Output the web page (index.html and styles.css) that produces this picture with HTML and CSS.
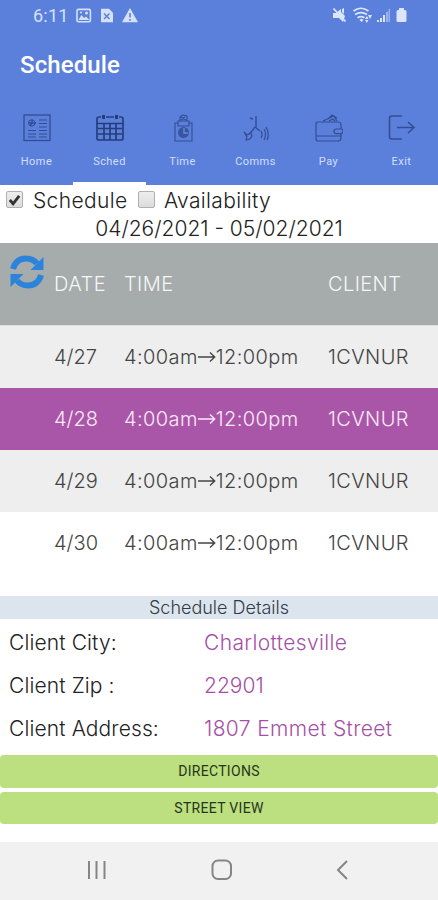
FILE: index.html
```html
<!DOCTYPE html>
<html lang="en">
<head>
<meta charset="utf-8">
<meta name="viewport" content="width=device-width">
<title>Schedule</title>
<link rel="stylesheet" href="styles.css">
</head>
<body>
<header class="appbar">
  <div class="status">
    <span class="clock">6:11</span>
    <svg class="status-left" width="62" height="16" viewBox="0 0 62 16" fill="#d5e0fa">
      <rect x="1" y="1.4" width="13.4" height="12.4" rx="1.5" fill="none" stroke="#d5e0fa" stroke-width="1.6"/>
      <path d="M2.500 12l3-5 2.500 3 2-1.500 3.500 3.500z"/><circle cx="10.500" cy="5" r="1.500"/><circle cx="5" cy="4.500" r="1"/>
      <path d="M25 .7h8l4 4v9.600H25z"/>
      <path d="M28 5.500l5.500 5.500M33.500 5.500L28 11" stroke="#5b80dc" stroke-width="1.500"/>
      <path d="M54 0l8 14.300H46z"/>
      <path d="M54 5v4.500M54 11v1.700" stroke="#5b80dc" stroke-width="1.600"/>
    </svg>
    <svg class="status-right" width="76" height="17" viewBox="0 0 76 17" fill="#dce5fc">
      <path d="M1 6h3l5-4v3l4 4-2 6-4-4H1zM10 2l2-1v6L10 5z"/>
      <path d="M1.500 1.500l12 13" stroke="#dce5fc" stroke-width="1.800"/>
      <g fill="none" stroke="#dce5fc" stroke-width="1.700"><path d="M21.500 4q7.500-5.500 15 0M23 7.500q6-3.800 12 0M25.500 10.700q3.500-2 7 0"/></g>
      <path d="M27.500 13l2-1.500 2 1.500-2 2zM33 12l2-3 1.500 3zM33 13h3.500l-1.700 3zM36 8h4l-2 4z"/>
      <path d="M45 13h2v2h-2zM48 11h2v4h-2zM51 8h2v7h-2z"/>
      <path d="M54 5h2v10h-2zM56.500 2h1.500v13h-1.500z" opacity=".5"/>
      <path d="M67 1h5v2h1q1.500 0 1.500 1.500v9q0 1.500-1.500 1.500h-7q-1.500 0-1.500-1.500v-9Q64.500 3 66 3h1z"/>
    </svg>
  </div>
  <h1 class="title">Schedule</h1>
  <nav class="tabs">
    <div class="tab"><svg class="tab-icon" viewBox="0 0 28 28"><rect x="1" y="1" width="26" height="25.500" stroke-width="1.300"/><path d="M16 6h8M16 9.500h8M16 13h8M5 16.500h8M5 20h8M5 23h8M16 16.500h8M16 20h8M16 23h8"/><circle cx="8.700" cy="9" r="3.200"/><path d="M9 5.500V9h4M6 9h3l-2 3" stroke-width="1.500"/></svg><span>Home</span></div>
    <div class="tab active"><svg class="tab-icon" viewBox="0 0 28 28"><path d="M5 3H3Q1 3 1 5v19q0 2 2 2h22q2 0 2-2V5q0-2-2-2h-2M10 3h8M1 9.500h26M2 14.500h24M2 20h24M8 10v16M14 10v16M20 10v16" stroke-width="1.700"/><path d="M7.500 1v4M20.500 1v4" stroke-width="3"/></svg><span>Sched</span></div>
    <div class="tab"><svg class="tab-icon" viewBox="0 0 28 28"><path d="M9 9H6v18h17V9h-3M9 7h11v5H9zM11 7V4q0-2 3-3l4 1v5M12 3l5 3M12 6l4-3" stroke-width="1.100"/><circle cx="14.500" cy="18.500" r="5.500" fill="#3a559d" stroke="none"/><path d="M15 14v5h4" stroke="#668be0" stroke-width="1.400"/></svg><span>Time</span></div>
    <div class="tab"><svg class="tab-icon" viewBox="0 0 28 28"><path d="M14 2v12M8 4l3 1M13 13l-3 4-3 3M14 14l4 3" stroke-width="1.400"/><path d="M2 18l3 3 4-2 1 3q-2 4-6 4l1-3zM19 17q2 3 0 7M22 15q3 5 0 11M24 13q4 7 1 13" stroke-width="1.200"/></svg><span>Comms</span></div>
    <div class="tab"><svg class="tab-icon" viewBox="0 0 28 28"><path d="M3 8h20q3 0 3 3v4M26 20v4q0 3-3 3H3q-2 0-2-2V10q0-2 2-2M1 22h25M26 15h-5q-2 0-2 2.300t2 2.300h5q2 0 2-2.300T26 15M8 7l11-5 3 5M13 5l4-4 5 3M14 7l4-2 2 2" stroke-width="1.200"/></svg><span>Pay</span></div>
    <div class="tab"><svg class="tab-icon" viewBox="0 0 28 28"><path d="M14 2H4Q1.500 2 1.500 4.500v18Q1.500 25 4 25h10M9 13.500h17M20 8l6 5.500-6 5.500" stroke-width="1.600"/></svg><span>Exit</span></div>
  </nav>
</header>

<section class="filters">
  <div class="checks">
    <span class="box"><svg width="16" height="16" viewBox="0 0 16 16"><path d="M3 8l3.500 4L13 3.500" fill="none" stroke="#303234" stroke-width="3"/></svg></span>
    <span class="check-label first">Schedule</span>
    <span class="box"></span>
    <span class="check-label second">Availability</span>
  </div>
  <div class="range">04/26/2021 - 05/02/2021</div>
</section>

<section class="schedule">
  <div class="row head">
    <svg class="refresh" viewBox="0 0 34 34"><path d="M3 14Q6 3.500 16 3.500q7 0 11 5" fill="none" stroke="#2c83dc" stroke-width="6"/><path d="M33.500 2v13H20.500z" fill="#2c83dc"/><path d="M31 20q-3 10.500-13 10.500-7 0-11-5" fill="none" stroke="#2c83dc" stroke-width="6"/><path d="M.5 32V19h13z" fill="#2c83dc"/></svg>
    <span class="date">DATE</span><span class="time">TIME</span><span class="client">CLIENT</span>
  </div>
  <div class="row alt"><i></i><span class="date">4/27</span><span class="time">4:00am<svg class="arrow" viewBox="0 0 18 12"><path d="M0 6h16.500M12 1.500L16.700 6 12 10.500"/></svg>12:00pm</span><span class="client">1CVNUR</span></div>
  <div class="row selected"><i></i><span class="date">4/28</span><span class="time">4:00am<svg class="arrow" viewBox="0 0 18 12"><path d="M0 6h16.500M12 1.500L16.700 6 12 10.500"/></svg>12:00pm</span><span class="client">1CVNUR</span></div>
  <div class="row alt"><i></i><span class="date">4/29</span><span class="time">4:00am<svg class="arrow" viewBox="0 0 18 12"><path d="M0 6h16.500M12 1.500L16.700 6 12 10.500"/></svg>12:00pm</span><span class="client">1CVNUR</span></div>
  <div class="row"><i></i><span class="date">4/30</span><span class="time">4:00am<svg class="arrow" viewBox="0 0 18 12"><path d="M0 6h16.500M12 1.500L16.700 6 12 10.500"/></svg>12:00pm</span><span class="client">1CVNUR</span></div>
</section>

<section class="details">
  <h2 class="details-title">Schedule Details</h2>
  <dl class="facts">
    <dt>Client City:</dt><dd>Charlottesville</dd>
    <dt>Client Zip :</dt><dd class="zip">22901</dd>
    <dt>Client Address:</dt><dd class="address">1807 Emmet Street</dd>
  </dl>
</section>

<div class="actions">
  <button class="action">DIRECTIONS</button>
  <button class="action">STREET VIEW</button>
</div>

<footer class="navbar">
  <svg width="20" height="20" viewBox="0 0 20 20"><path d="M2 1v18M9.500 1v18M17.500 1v18"/></svg>
  <svg width="22" height="22" viewBox="0 0 22 22"><rect x="1.500" y="1.500" width="18.500" height="18.500" rx="5.500"/></svg>
  <svg width="12" height="20" viewBox="0 0 12 20"><path d="M11 1L2 10l9 9"/></svg>
</footer>
</body>
</html>
```
FILE: styles.css
```css
* { box-sizing: border-box; }
body {
  margin: 0;
  width: 438px;
  height: 900px;
  overflow: hidden;
  display: flex;
  flex-direction: column;
  background: #fff;
  color: #222;
  font-family: Inter, sans-serif;
  font-weight: 300;
  white-space: nowrap;
}
.appbar {
  height: 185px;
  background: #5b80dc;
  font-family: Roboto, sans-serif;
  display: flex;
  flex-direction: column;
}
.status { height: 32px; display: flex; align-items: flex-start; padding: 0 30px 0 33px; }
.clock { width: 43px; color: #d5e0fa; font-size: 18px; font-weight: 400; line-height: 32px; letter-spacing: .2px; }
.status-left { margin-top: 8px; }
.status-right { margin: 7px 0 0 auto; }
.title { margin: 17px 0 0 20px; height: 32px; line-height: 32px; font-size: 24px; font-weight: 500; letter-spacing: .1px; color: #fff; }
.tabs { flex: 1; display: grid; grid-template-columns: repeat(6, 73px); }
.tab { display: flex; flex-direction: column; align-items: center; padding-top: 33px; font-size: 11px; font-weight: 400; line-height: 14px; letter-spacing: .45px; color: #d2dffb; }
.tab.active { border-bottom: 3px solid #fff; }
.tab-icon { width: 28px; height: 28px; margin-bottom: 13px; fill: none; stroke: #344d91; stroke-width: 1; }
.active .tab-icon { stroke: #263e78; }

.filters { height: 58px; }
.checks { height: 30px; display: flex; align-items: center; padding: 2px 0 0 6px; }
.box { width: 17px; height: 17px; border: 1px solid #b0b0b0; border-radius: 2px; background: linear-gradient(#eee, #dcdcdc); display: flex; margin-top: -4px; }
.check-label { font-size: 21px; line-height: 28px; letter-spacing: .35px; }
.first { width: 105px; margin-left: 10px; }
.second { margin-left: 9px; }
.range { text-align: center; font-size: 21px; line-height: 28px; }

.schedule { height: 353px; font-size: 20px; color: #444; }
.row { height: 62px; display: grid; grid-template-columns: 54px 70px 204px 110px; align-items: center; padding-bottom: 1px; letter-spacing: .4px; }
.date { letter-spacing: 0; }
.head { height: 83px; background: #a6abab; color: #f5f7f7; border-bottom: 1px solid #dfe1e1; padding-bottom: 0; }
.head .date { letter-spacing: .5px; }
.refresh { width: 34px; height: 34px; margin: 12px 0 0 10px; align-self: start; }
.alt { background: #eee; }
.selected { background: #aa56a8; color: #f8eaf8; }
.arrow { width: 18px; height: 12px; fill: none; stroke: currentColor; stroke-width: 1.4; vertical-align: 1px; }

.details-title { margin: 0; height: 23px; line-height: 24px; background: #dce5ee; text-align: center; font-size: 18px; font-weight: 300; color: #333b44; }
.facts { margin: 0; padding: 2px 0 0 9px; height: 136px; display: grid; grid-template-columns: 195px 1fr; grid-auto-rows: 43px; align-items: center; align-content: start; font-size: 21px; letter-spacing: .12px; }
.facts dd { margin: 0; color: #a650a5; letter-spacing: .37px; }
.facts .zip { letter-spacing: 0; }

.actions { height: 87px; display: flex; flex-direction: column; gap: 4px; }
.action { height: 32.5px; border: 0; border-radius: 4px; background: #bce080; color: #28351c; font-family: Roboto, sans-serif; font-size: 14px; letter-spacing: .3px; padding: 0; }
.navbar { height: 58px; background: #f1f1f1; display: flex; align-items: center; justify-content: space-between; padding: 0 90px 2px 87px; }
.navbar svg { fill: none; stroke: #858585; stroke-width: 2; }
```
